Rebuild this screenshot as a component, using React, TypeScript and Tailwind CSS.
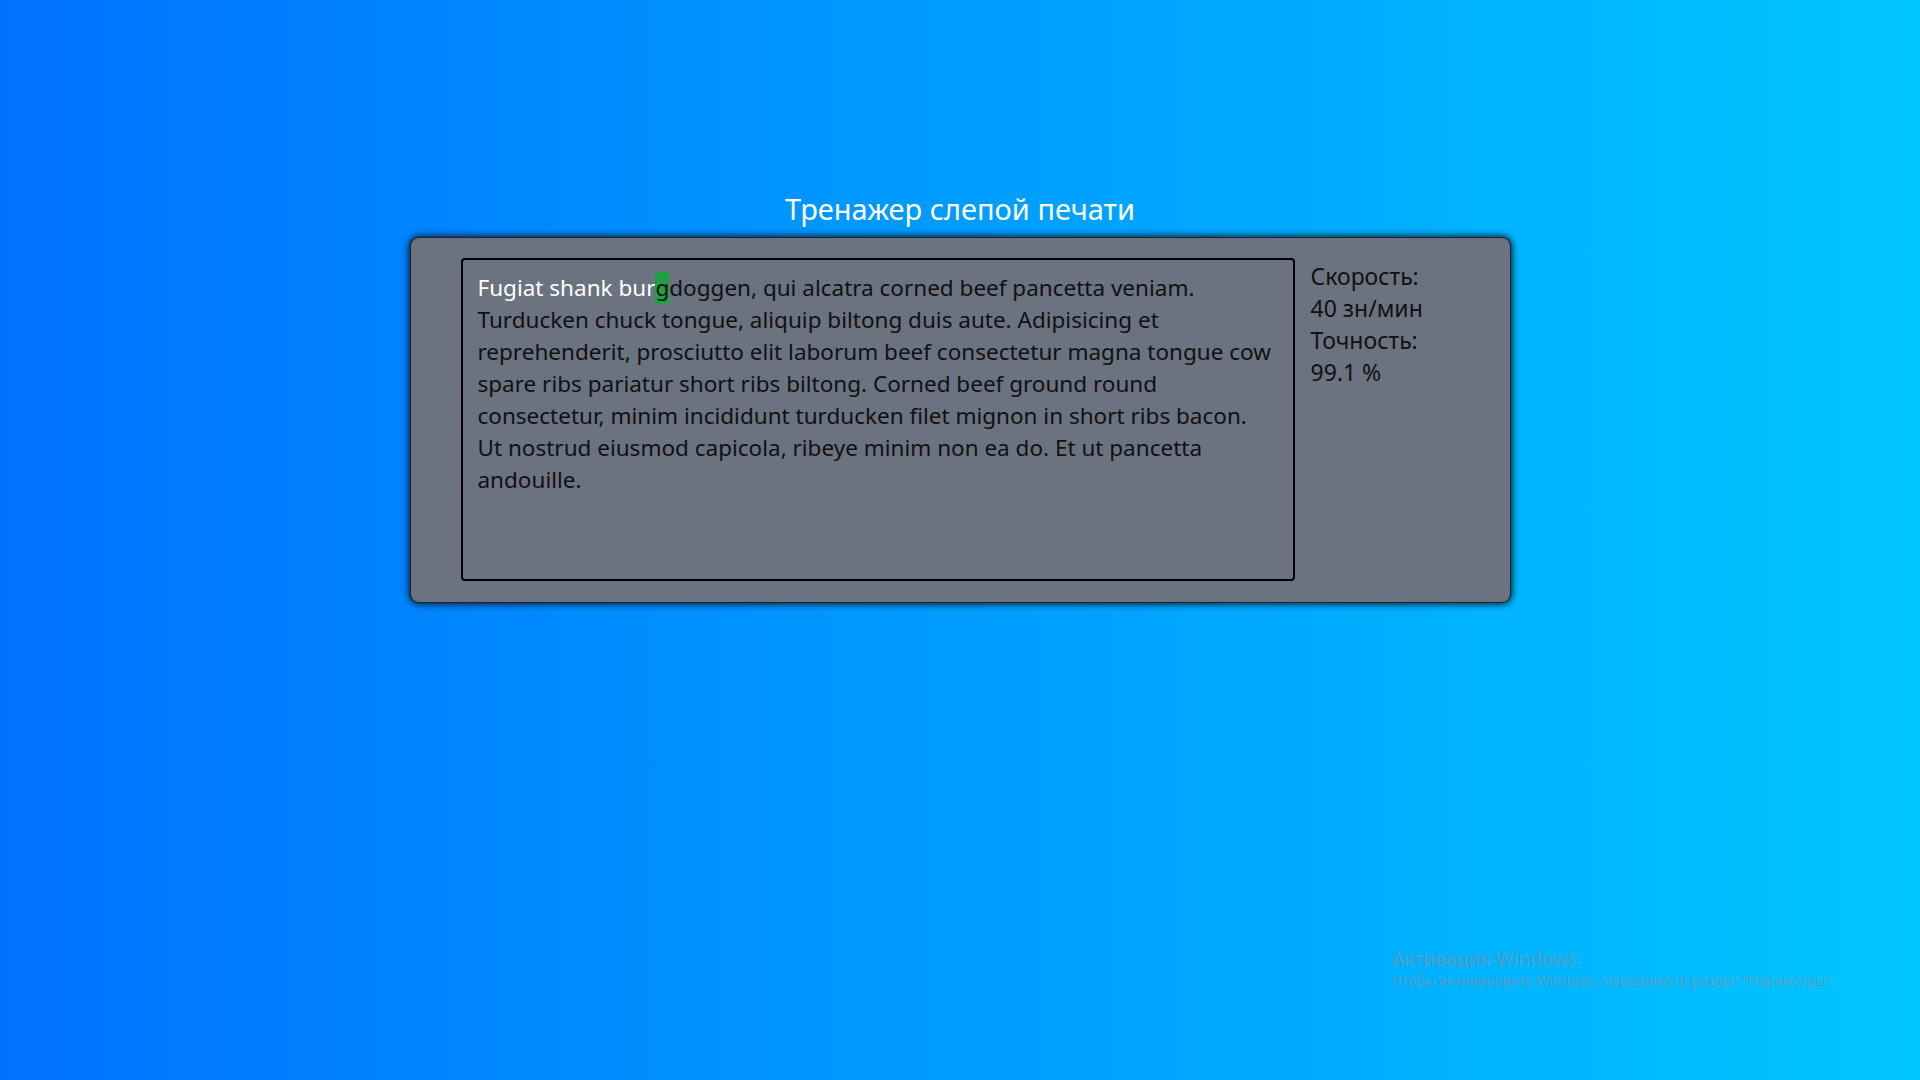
const lines = [
  "doggen, qui alcatra corned beef pancetta veniam.",
  "Turducken chuck tongue, aliquip biltong duis aute. Adipisicing et",
  "reprehenderit, prosciutto elit laborum beef consectetur magna tongue cow",
  "spare ribs pariatur short ribs biltong. Corned beef ground round",
  "consectetur, minim incididunt turducken filet mignon in short ribs bacon.",
  "Ut nostrud eiusmod capicola, ribeye minim non ea do. Et ut pancetta",
  "andouille.",
];

export default function App() {
  return (
    <div className="relative flex min-h-screen flex-col items-center bg-[linear-gradient(to_right,#0072ff,#00c6ff)] pt-[189px] font-['Noto_Sans',sans-serif]">
      <h1 className="text-[29px] leading-[40px] text-white">Тренажер слепой печати</h1>

      <div className="mt-[8px] flex h-[366px] w-[1101px] rounded-[9px] border border-black/70 bg-[#6b7280] pl-[50px] pt-[20px] shadow-[0_0_7px_1px_rgba(0,0,0,0.85)]">
        <div className="h-[323px] w-[834px] shrink-0 rounded-[4px] border-2 border-black px-[15px] pt-[12px] text-[22.5px] leading-[32px] text-[#111]">
          <div className="whitespace-pre">
            <span className="text-white">Fugiat shank bur</span>
            <span className="inline-block bg-[#20a040] leading-[32px]">g</span>
            {lines[0]}
          </div>
          {lines.slice(1).map((l) => (
            <div key={l} className="whitespace-pre">
              {l}
            </div>
          ))}
        </div>

        <div className="ml-[16px] mt-[2px] text-[23px] leading-[32px] text-[#111]">
          <div>Скорость:</div>
          <div>40 зн/мин</div>
          <div>Точность:</div>
          <div>99.1 %</div>
        </div>
      </div>

      <div className="absolute left-[1392px] top-[946px] text-[rgba(135,145,160,0.65)]">
        <div className="text-[19px] leading-[26px]">Активация Windows</div>
        <div className="text-[14px] leading-[18px]">Чтобы активировать Windows, перейдите в раздел "Параметры".</div>
      </div>
    </div>
  );
}
